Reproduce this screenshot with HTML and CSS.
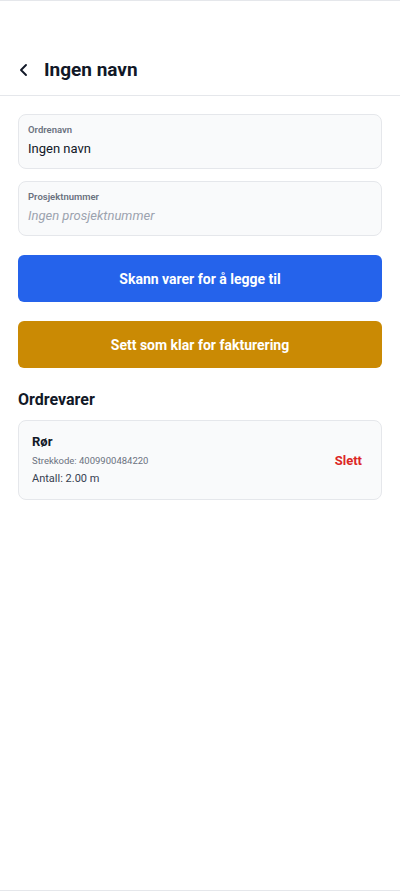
FILE: index.html
```html
<!DOCTYPE html>
<html lang="no">
<head>
<meta charset="utf-8">
<link rel="stylesheet" href="styles.css">
</head>
<body>
<div class="screen">
  <header class="header">
    <svg class="back" width="16" height="16" viewBox="0 0 16 16" aria-hidden="true">
      <path d="M10 3 L5 8 L10 13" fill="none" stroke="#111827" stroke-width="1.9" stroke-linecap="round" stroke-linejoin="round"/>
    </svg>
    <h1 class="title">Ingen navn</h1>
  </header>
  <main class="content">
    <div class="field">
      <div class="field-label">Ordrenavn</div>
      <div class="field-value">Ingen navn</div>
    </div>
    <div class="field">
      <div class="field-label">Prosjektnummer</div>
      <div class="field-value placeholder">Ingen prosjektnummer</div>
    </div>
    <button class="btn btn-blue">Skann varer for å legge til</button>
    <button class="btn btn-gold">Sett som klar for fakturering</button>
    <h2 class="section-title">Ordrevarer</h2>
    <div class="item">
      <div class="item-info">
        <div class="item-name">Rør</div>
        <div class="item-code">Strekkode: 4009900484220</div>
        <div class="item-qty">Antall: 2.00 m</div>
      </div>
      <div class="item-delete">Slett</div>
    </div>
  </main>
</div>
</body>
</html>
```
FILE: styles.css
```css
* { box-sizing: border-box; }
html, body { margin: 0; padding: 0; background: #ffffff; }
body { font-family: Roboto, "Liberation Sans", Arial, sans-serif; color: #111827; }
.screen {
  height: 891px;
  border-top: 1px solid #e5e7eb;
  border-bottom: 1px solid #e5e7eb;
  display: flex;
  flex-direction: column;
}
.header {
  display: flex;
  align-items: center;
  gap: 12px;
  padding: 55px 16px 11px 16px;
  border-bottom: 1px solid #e5e7eb;
}
.back { display: block; flex: none; }
.title {
  margin: 0;
  font-size: 19px;
  line-height: 28px;
  font-weight: 700;
  color: #111827;
}
.content {
  padding: 18px 18px;
  display: flex;
  flex-direction: column;
}
.field {
  background: #f9fafb;
  border: 1px solid #e5e7eb;
  border-radius: 8px;
  padding: 7px 9px 8px;
  margin-bottom: 12px;
}
.field-label {
  font-size: 9.5px;
  line-height: 16px;
  font-weight: 600;
  color: #6b7280;
}
.field-value {
  font-size: 13px;
  line-height: 22px;
  color: #111827;
}
.field-value.placeholder { color: #9ca3af; font-style: italic; }
.btn {
  display: block;
  width: 100%;
  height: 47px;
  border: 0;
  border-radius: 6px;
  color: #ffffff;
  font-family: inherit;
  font-size: 14px;
  font-weight: 700;
}
.btn-blue { background: #2563eb; margin-top: 7px; }
.btn-gold { background: #ca8a04; margin-top: 19px; }
.section-title {
  margin: 20px 0 8px;
  font-size: 16px;
  line-height: 24px;
  font-weight: 700;
  color: #111827;
}
.item {
  display: flex;
  align-items: center;
  justify-content: space-between;
  background: #f9fafb;
  border: 1px solid #e5e7eb;
  border-radius: 8px;
  padding: 11px 19px 11px 13px;
}
.item-name { font-size: 13px; line-height: 20px; font-weight: 700; color: #111827; }
.item-code { font-size: 9.5px; line-height: 18px; color: #6b7280; }
.item-qty { font-size: 11px; line-height: 18px; color: #374151; }
.item-delete { font-size: 13px; font-weight: 700; color: #dc2626; }
```
